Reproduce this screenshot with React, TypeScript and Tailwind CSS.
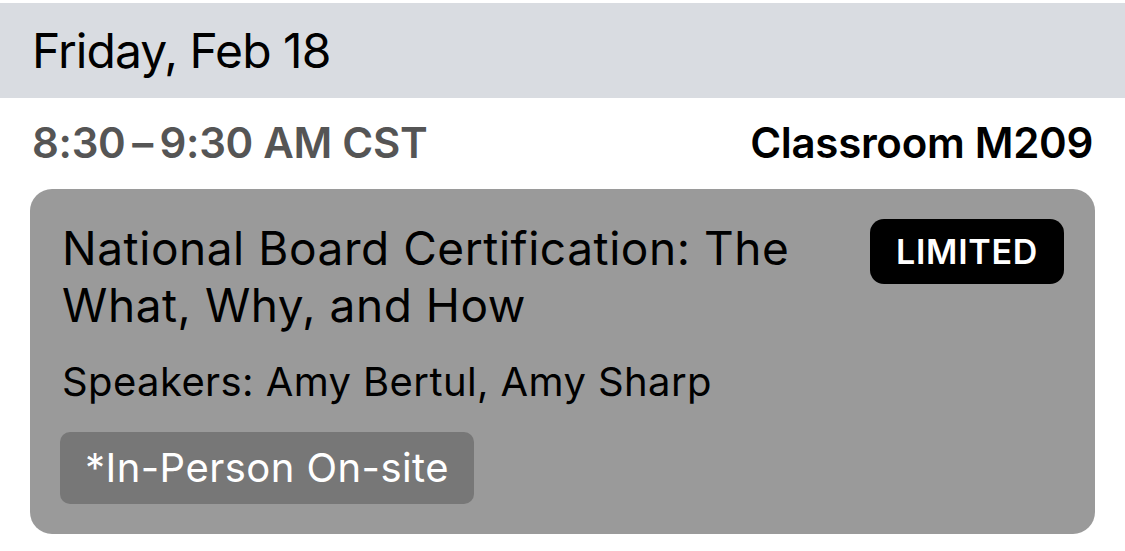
export default function App() {
  return (
    <div className="w-[1125px] h-[551px] bg-white pt-[3px]" style={{ fontFamily: 'Inter, "Noto Sans", sans-serif' }}>
      <div className="h-[95px] bg-[#d9dce1] flex items-center px-[32px]">
        <span className="text-[48px] text-black tracking-[-0.95px]">Friday, Feb 18</span>
      </div>
      <div className="flex items-center justify-between h-[91px] px-[32px] pb-[2px]">
        <span className="text-[42px] font-semibold text-[#555555] tracking-[-0.3px]">8:30{'\u2009'}–{'\u2009'}9:30 AM CST</span>
        <span className="text-[42px] font-semibold text-black tracking-[-0.3px]">Classroom M209</span>
      </div>
      <div className="mx-[30px] h-[345px] rounded-[22px] bg-[#9a9a9a] pl-[32px] pr-[31px] pt-[30px]">
        <div className="flex items-start justify-between">
          <div className="mt-[1px] text-[46px] leading-[57px] text-black tracking-[0.55px] w-[780px]">
            National Board Certification: The What, Why, and How
          </div>
          <div className="h-[65px] w-[194px] justify-center rounded-[14px] bg-black text-white text-[34px] font-semibold tracking-[0.7px] flex items-center">
            LIMITED
          </div>
        </div>
        <div className="mt-[24px] text-[40px] leading-[48px] tracking-[0.4px] text-black">Speakers: Amy Bertul, Amy Sharp</div>
        <div className="mt-[26px] -ml-[2px] inline-flex items-center h-[72px] px-[25px] rounded-[10px] bg-[#777777] text-white text-[40px] tracking-[0.45px]">
          *In-Person On-site
        </div>
      </div>
    </div>
  );
}
